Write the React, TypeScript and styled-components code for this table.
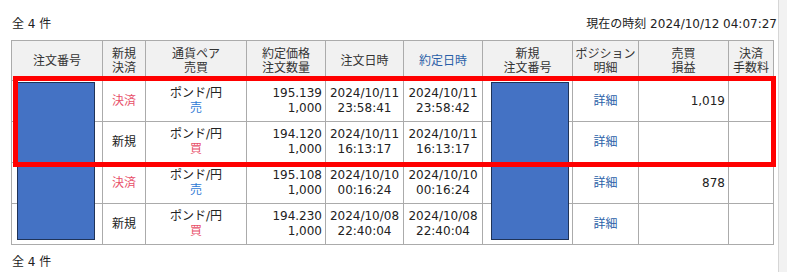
import styled, { createGlobalStyle } from 'styled-components';

const GlobalStyle = createGlobalStyle`
  html, body {
    margin: 0;
    padding: 0;
    background: #f2f2f2;
  }
  body {
    font-family: "DejaVu Sans", "Noto Sans CJK JP", sans-serif;
    font-size: 12px;
    color: #222;
  }
`;

interface IRow {
  kind: '決済' | '新規';
  side: '売' | '買';
  price: string;
  qty: string;
  orderDate: string;
  orderTime: string;
  execDate: string;
  execTime: string;
  pnl: string;
}

const rows: IRow[] = [
  { kind: '決済', side: '売', price: '195.139', qty: '1,000', orderDate: '2024/10/11', orderTime: '23:58:41', execDate: '2024/10/11', execTime: '23:58:42', pnl: '1,019' },
  { kind: '新規', side: '買', price: '194.120', qty: '1,000', orderDate: '2024/10/11', orderTime: '16:13:17', execDate: '2024/10/11', execTime: '16:13:17', pnl: '' },
  { kind: '決済', side: '売', price: '195.108', qty: '1,000', orderDate: '2024/10/10', orderTime: '00:16:24', execDate: '2024/10/10', execTime: '00:16:24', pnl: '878' },
  { kind: '新規', side: '買', price: '194.230', qty: '1,000', orderDate: '2024/10/08', orderTime: '22:40:04', execDate: '2024/10/08', execTime: '22:40:04', pnl: '' },
];

const widths = [91, 43, 101, 79, 78, 79, 90, 66, 90, 45];

function App() {
  return (
    <>
      <GlobalStyle />
      <Page>
        <TopBar>
          <span>全 4 件</span>
          <span>現在の時刻 2024/10/12 04:07:27</span>
        </TopBar>
        <Table>
          <colgroup>
            {widths.map((w, i) => (
              <col key={i} style={{ width: w }} />
            ))}
          </colgroup>
          <thead>
            <tr>
              <Th>注文番号</Th>
              <Th>新規<br />決済</Th>
              <Th>通貨ペア<br />売買</Th>
              <Th>約定価格<br />注文数量</Th>
              <Th>注文日時</Th>
              <Th sorted>約定日時</Th>
              <Th>新規<br />注文番号</Th>
              <Th>ポジション<br />明細</Th>
              <Th>売買<br />損益</Th>
              <Th>決済<br />手数料</Th>
            </tr>
          </thead>
          <tbody>
            {rows.map((r, i) => (
              <tr key={i}>
                <Td />
                <Td>
                  <Kind settle={r.kind === '決済'}>{r.kind}</Kind>
                </Td>
                <Td>
                  ポンド/円<br />
                  <Side sell={r.side === '売'}>{r.side}</Side>
                </Td>
                <Td align="right">
                  {r.price}<br />{r.qty}
                </Td>
                <Td>
                  {r.orderDate}<br />{r.orderTime}
                </Td>
                <Td>
                  {r.execDate}<br />{r.execTime}
                </Td>
                <Td />
                <Td>
                  <DetailLink href="#">詳細</DetailLink>
                </Td>
                <Td align="right">{r.pnl}</Td>
                <Td />
              </tr>
            ))}
          </tbody>
        </Table>
        <BottomBar>全 4 件</BottomBar>

        <Redaction style={{ left: 17, top: 82, width: 78, height: 158 }} />
        <Redaction style={{ left: 491, top: 82, width: 78, height: 158 }} />
        <Highlight />
      </Page>
    </>
  );
}

export default App;

const Page = styled.div`
  position: relative;
  width: 778px;
  height: 272px;
  background: #fff;
  border-right: 1px solid #d6d6d6;
  overflow: hidden;
`;

const TopBar = styled.div`
  display: flex;
  justify-content: space-between;
  align-items: center;
  height: 16px;
  padding: 16px 1px 8px 12px;
  width: 765px;
  line-height: 16px;
  color: #222;
`;

const Table = styled.table`
  margin-left: 11px;
  width: 763px;
  table-layout: fixed;
  border-collapse: collapse;
  border: 1px solid #ababab;
`;

const Th = styled.th<{ sorted?: boolean }>`
  height: 39px;
  padding: 0;
  background: #f1f1f1;
  border: 1px solid #ababab;
  font-weight: normal;
  line-height: 14px;
  text-align: center;
  color: ${({ sorted }) => (sorted ? '#2a5fa8' : '#333')};
`;

const Td = styled.td<{ align?: 'right' | 'center' }>`
  height: 40px;
  padding: 0 3px;
  border: 1px solid #ababab;
  line-height: 15px;
  text-align: ${({ align }) => align ?? 'center'};
  color: #222;
  white-space: nowrap;
`;

const Kind = styled.span<{ settle: boolean }>`
  color: ${({ settle }) => (settle ? '#e8506a' : '#222')};
`;

const Side = styled.span<{ sell: boolean }>`
  color: ${({ sell }) => (sell ? '#2f7ad6' : '#e8506a')};
`;

const DetailLink = styled.a`
  color: #2a5fa8;
  text-decoration: none;
`;

const BottomBar = styled.div`
  padding: 9px 0 0 12px;
  line-height: 16px;
`;

const Redaction = styled.div`
  position: absolute;
  box-sizing: border-box;
  background: #4472c4;
  border: 1px solid #1f3358;
`;

const Highlight = styled.div`
  position: absolute;
  box-sizing: border-box;
  left: 13px;
  top: 76px;
  width: 763px;
  height: 91px;
  border: 5px solid #ff0000;
`;
